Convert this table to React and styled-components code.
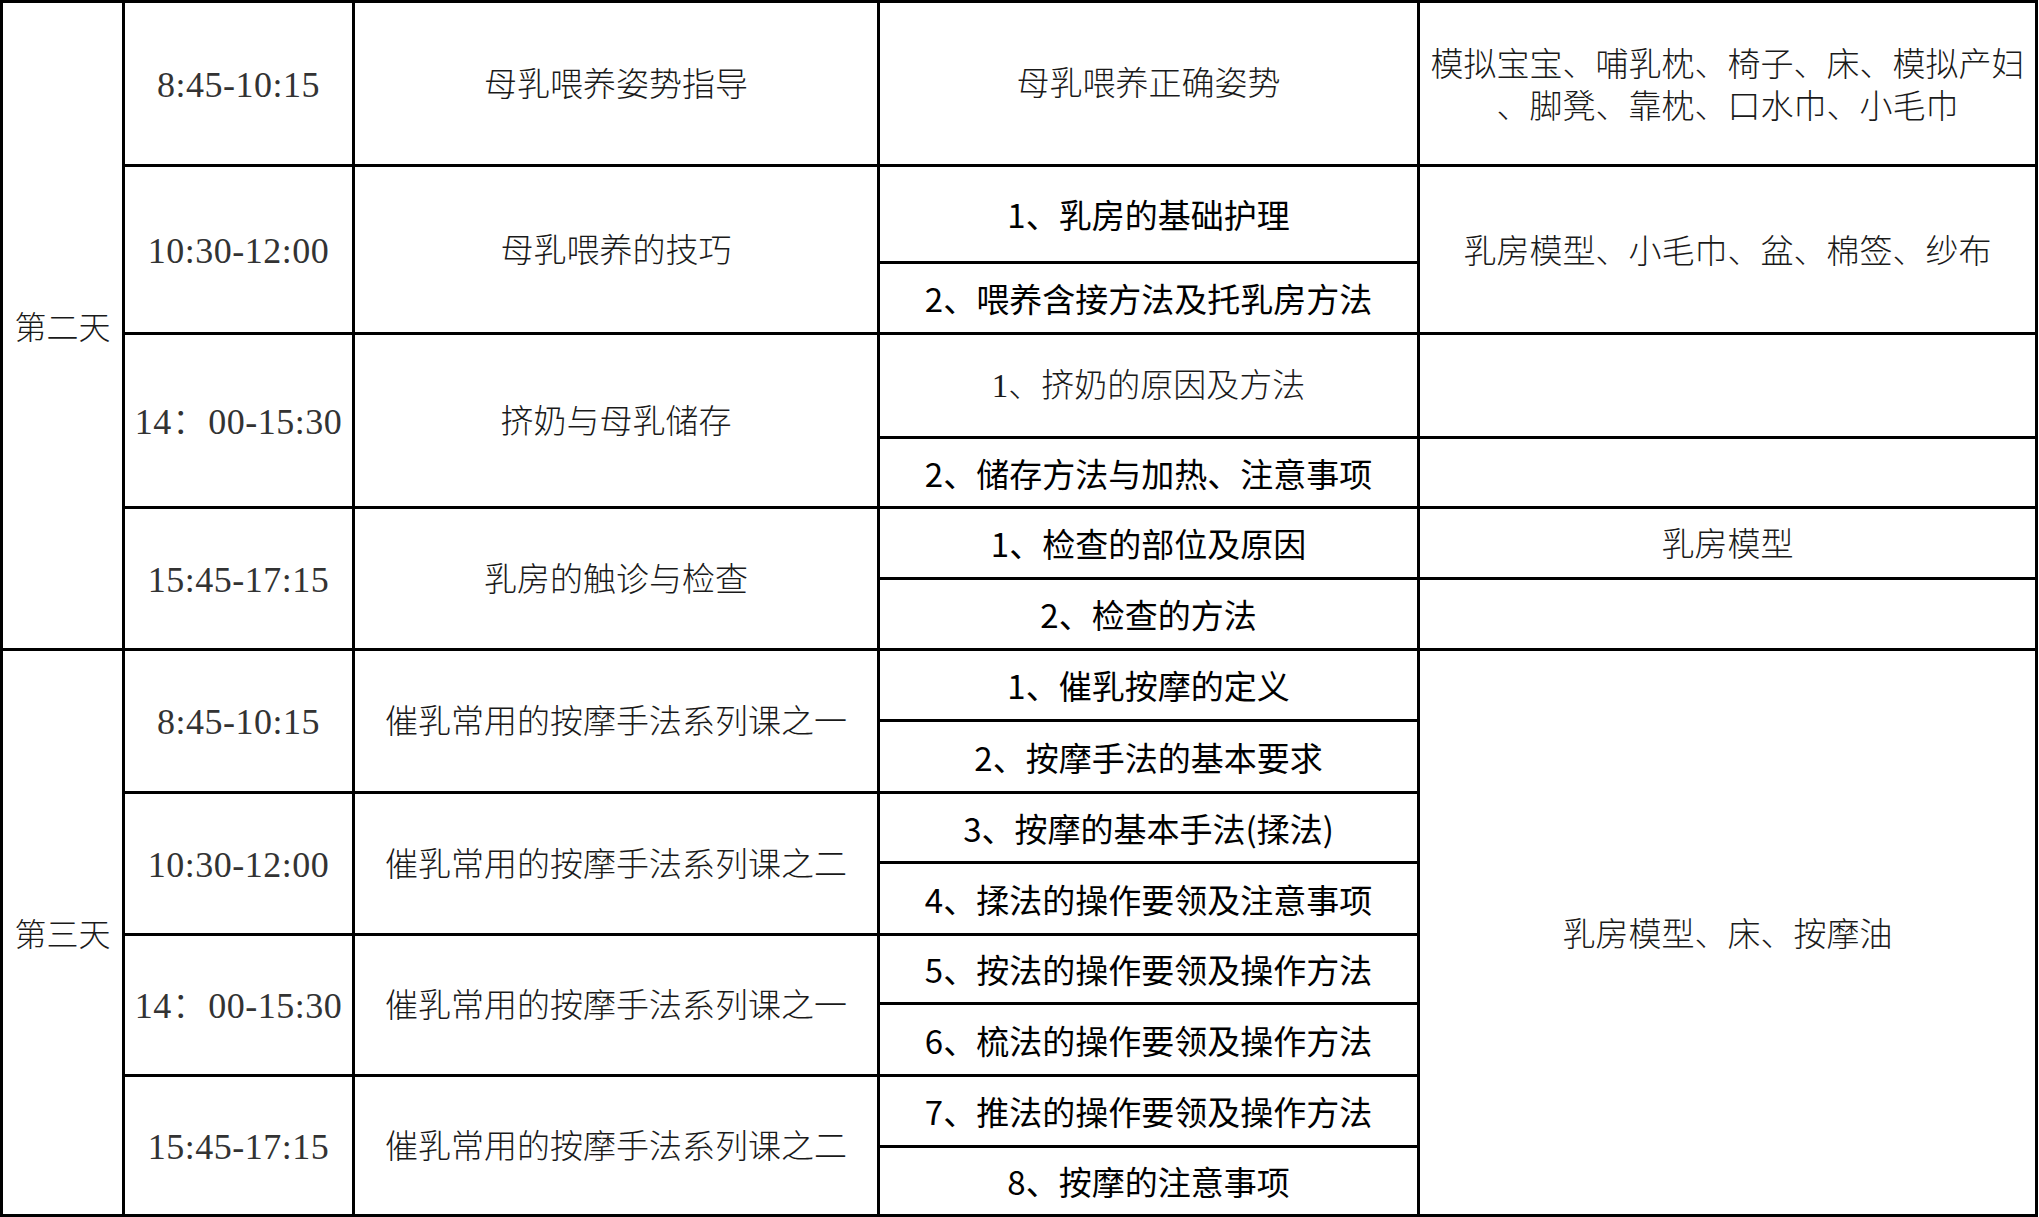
import React from "react";
import styled, { createGlobalStyle } from "styled-components";

const GlobalStyle = createGlobalStyle`
  html, body {
    margin: 0;
    padding: 0;
    background: #fff;
  }
`;

const days = [
  {
    label: "第二天",
    start: 1,
    span: 7,
    sessions: [
      {
        time: "8:45-10:15",
        topic: "母乳喂养姿势指导",
        items: [{ text: "母乳喂养正确姿势", serif: true }],
        materials: [{ lines: ["模拟宝宝、哺乳枕、椅子、床、模拟产妇", "、脚凳、靠枕、口水巾、小毛巾"], span: 1 }],
      },
      {
        time: "10:30-12:00",
        topic: "母乳喂养的技巧",
        items: [{ text: "1、乳房的基础护理" }, { text: "2、喂养含接方法及托乳房方法" }],
        materials: [{ lines: ["乳房模型、小毛巾、盆、棉签、纱布"], span: 2 }],
      },
      {
        time: "14：00-15:30",
        topic: "挤奶与母乳储存",
        items: [{ text: "1、挤奶的原因及方法", serif: true }, { text: "2、储存方法与加热、注意事项" }],
        materials: [{ lines: [], span: 1 }, { lines: [], span: 1 }],
      },
      {
        time: "15:45-17:15",
        topic: "乳房的触诊与检查",
        items: [{ text: "1、检查的部位及原因" }, { text: "2、检查的方法" }],
        materials: [{ lines: ["乳房模型"], span: 1 }, { lines: [], span: 1 }],
      },
    ],
  },
  {
    label: "第三天",
    start: 8,
    span: 8,
    sessions: [
      {
        time: "8:45-10:15",
        topic: "催乳常用的按摩手法系列课之一",
        items: [{ text: "1、催乳按摩的定义" }, { text: "2、按摩手法的基本要求" }],
        materials: [{ lines: ["乳房模型、床、按摩油"], span: 8 }],
      },
      {
        time: "10:30-12:00",
        topic: "催乳常用的按摩手法系列课之二",
        items: [{ text: "3、按摩的基本手法(揉法)" }, { text: "4、揉法的操作要领及注意事项" }],
        materials: [],
      },
      {
        time: "14：00-15:30",
        topic: "催乳常用的按摩手法系列课之一",
        items: [{ text: "5、按法的操作要领及操作方法" }, { text: "6、梳法的操作要领及操作方法" }],
        materials: [],
      },
      {
        time: "15:45-17:15",
        topic: "催乳常用的按摩手法系列课之二",
        items: [{ text: "7、推法的操作要领及操作方法" }, { text: "8、按摩的注意事项" }],
        materials: [],
      },
    ],
  },
];

const Sheet = styled.div`
  display: grid;
  grid-template-columns: 119px 227px 522px 537px 615px;
  grid-template-rows: 161px 94px 68px 101px 67px 68px 68px 68px 69px 67px 69px 66px 69px 68px 66px;
  gap: 3px;
  padding: 3px;
  background: #000;
  width: max-content;
`;

const Cell = styled.div`
  grid-column: ${(p) => p.$col};
  grid-row: ${(p) => p.$row} / span ${(p) => p.$span || 1};
  background: #fff;
  display: flex;
  align-items: center;
  justify-content: center;
  text-align: center;
  white-space: nowrap;
  color: #1a1a1a;
  font-family: "Liberation Serif", "Noto Sans CJK SC", serif;
  font-weight: 300;
  font-size: 33px;
  line-height: 42px;
`;

const DayCell = styled(Cell)`
  font-size: 32px;
  padding-top: 4px;
`;

const TimeCell = styled(Cell)`
  font-size: 36px;
  letter-spacing: 0.5px;
  color: #333;
  padding-top: 2px;
`;

const TopicCell = styled(Cell)`
  padding-top: 2px;
`;

const ItemCell = styled(Cell)`
  font-family: ${(p) =>
    p.$serif
      ? `"Liberation Serif", "Noto Sans CJK SC", serif`
      : `"Noto Sans CJK SC", "Liberation Sans", sans-serif`};
  font-weight: ${(p) => (p.$serif ? 300 : 400)};
  color: ${(p) => (p.$serif ? "#1a1a1a" : "#000")};
  font-size: 33px;
`;

const MaterialCell = styled(Cell)`
  flex-direction: column;
  padding-top: 4px;
`;

export default function App() {
  const cells = [];
  days.forEach((day) => {
    cells.push(
      <DayCell key={day.label} $col={1} $row={day.start} $span={day.span}>
        {day.label}
      </DayCell>
    );
    let row = day.start;
    day.sessions.forEach((s, si) => {
      const span = s.items.length;
      cells.push(
        <TimeCell key={`${day.label}-t${si}`} $col={2} $row={row} $span={span}>
          {s.time}
        </TimeCell>
      );
      cells.push(
        <TopicCell key={`${day.label}-p${si}`} $col={3} $row={row} $span={span}>
          {s.topic}
        </TopicCell>
      );
      s.items.forEach((it, ii) => {
        cells.push(
          <ItemCell key={`${day.label}-i${si}-${ii}`} $col={4} $row={row + ii} $serif={it.serif}>
            {it.text}
          </ItemCell>
        );
      });
      let mrow = row;
      s.materials.forEach((m, mi) => {
        cells.push(
          <MaterialCell key={`${day.label}-m${si}-${mi}`} $col={5} $row={mrow} $span={m.span}>
            {m.lines.map((l) => (
              <span key={l}>{l}</span>
            ))}
          </MaterialCell>
        );
        mrow += m.span;
      });
      row += span;
    });
  });

  return (
    <>
      <GlobalStyle />
      <Sheet>{cells}</Sheet>
    </>
  );
}
